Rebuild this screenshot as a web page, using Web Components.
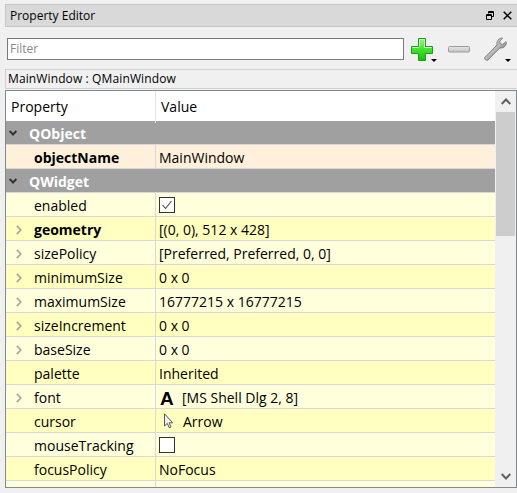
<!DOCTYPE html>
<html>
<head>
<meta charset="utf-8">
<style>
  html,body{ margin:0; height:493px; overflow:hidden; background:#f0f0f0; }
  body{ font:14px 'Open Sans','Noto Sans',sans-serif; color:#000; }
</style>
</head>
<body>
<property-editor>
  <pe-titlebar>Property Editor</pe-titlebar>
  <pe-toolbar></pe-toolbar>
  <pe-classbar>MainWindow : QMainWindow</pe-classbar>
  <prop-table>
    <prop-group>QObject</prop-group>
    <prop-row name="objectName" bold tone="orange">MainWindow</prop-row>
    <prop-group>QWidget</prop-group>
    <prop-row name="enabled" tone="light"><pe-check checked></pe-check></prop-row>
    <prop-row name="geometry" bold expand tone="dark">[(0, 0), 512 x 428]</prop-row>
    <prop-row name="sizePolicy" expand tone="light">[Preferred, Preferred, 0, 0]</prop-row>
    <prop-row name="minimumSize" expand tone="dark">0 x 0</prop-row>
    <prop-row name="maximumSize" expand tone="light">16777215 x 16777215</prop-row>
    <prop-row name="sizeIncrement" expand tone="dark">0 x 0</prop-row>
    <prop-row name="baseSize" expand tone="light">0 x 0</prop-row>
    <prop-row name="palette" tone="dark">Inherited</prop-row>
    <prop-row name="font" expand tone="light"><span style="font:bold 19px/25px 'Liberation Sans',sans-serif;width:14px;display:inline-block;margin:0 8px 0 1px;vertical-align:top">A</span>[MS Shell Dlg 2, 8]</prop-row>
    <prop-row name="cursor" tone="dark"><svg width="12" height="17" viewBox="0 0 12 17" style="margin:0 8px 0 4px;vertical-align:-3px"><path d="M1.500 .8v12.200l2.800-2.600 1.900 4.400 1.800-.8-1.900-4.200h3.600z" fill="#f4f4f4" stroke="#555"/></svg>Arrow</prop-row>
    <prop-row name="mouseTracking" tone="light"><pe-check></pe-check></prop-row>
    <prop-row name="focusPolicy" tone="dark">NoFocus</prop-row>
    <prop-row name="" tone="light"></prop-row>
  </prop-table>
</property-editor>
<script>
customElements.define('property-editor', class extends HTMLElement{
  constructor(){
    super()
    this.attachShadow({mode:'open'}).innerHTML = `
      <style>:host{ display:flex; flex-direction:column; padding:4px 0 0 5px; }</style>
      <slot></slot>`
  }
})

customElements.define('pe-titlebar', class extends HTMLElement{
  constructor(){
    super()
    this.attachShadow({mode:'open'}).innerHTML = `
      <style>
        :host{ display:flex; align-items:center; height:21px; padding-left:4px; background:#d9d9d9; border:1px solid #c6c6c6; border-right:0; font-size:12px; }
        span{ flex:1; line-height:20px; }
        svg{ display:block; }
        .btns{ display:flex; gap:9px; padding-right:5px; align-items:center; }
      </style>
      <span><slot></slot></span>
      <div class="btns">
        <svg width="8" height="9" viewBox="0 0 8 9" fill="none" stroke="#000"><path d="M2.500 2.500v-2h5v5h-2"/><path d="M.5 3.500h5v5h-5z"/><path d="M.5 4.500h5M2.500 1.500h5"/></svg>
        <svg width="9" height="9" viewBox="0 0 9 9" fill="none" stroke="#000" stroke-width="1.500"><path d="M.7.7l7.600 7.600M8.300.7L.7 8.300"/></svg>
      </div>`
  }
})

customElements.define('pe-toolbar', class extends HTMLElement{
  constructor(){
    super()
    this.attachShadow({mode:'open'}).innerHTML = `
      <style>
        :host{ display:flex; align-items:center; height:40px; padding:2px 0 0 2px; }
        .filter{ width:393px; height:20px; border:1px solid #7a7a7a; background:#fff; color:#8a8a8a; font-size:12px; line-height:19px; padding-left:2px; margin-right:7px; flex:none; }
        .tool{ position:relative; display:block; height:26px; flex:none; }
        .tool svg{ display:block; overflow:visible; }
        .drop{ position:absolute; bottom:0; width:0; height:0; border:3.500px solid transparent; border-top:3.500px solid #000; border-bottom:0; }
        .plus{ width:22px; margin-right:15px; }
        .plus .drop{ right:-4px; }
        .minus{ width:22px; margin-right:14px; }
        .wrench{ width:24px; }
        .wrench .drop{ right:-3px; }
      </style>
      <div class="filter">Filter</div>
      <div class="tool plus">
        <svg width="22" height="26" viewBox="0 0 22 26">
          <defs><linearGradient id="g" x1="0" y1="0" x2="0" y2="1"><stop offset="0" stop-color="#9ff088"/><stop offset=".5" stop-color="#45e030"/><stop offset="1" stop-color="#16c00c"/></linearGradient></defs>
          <path d="M7.500 2.500h7v8h7v7h-7v7h-7v-7h-7v-7h7z" fill="url(#g)" stroke="#14a014" stroke-linejoin="round"/>
          <path d="M8.500 10.500v-7h5v8h7M1.500 11.500h6" fill="none" stroke="#d2fbc8"/>
        </svg>
        <i class="drop"></i>
      </div>
      <div class="tool minus">
        <svg width="22" height="26" viewBox="0 0 22 26">
          <defs><linearGradient id="m" x1="0" y1="0" x2="0" y2="1"><stop offset="0" stop-color="#e8e8e8"/><stop offset="1" stop-color="#c2c2c2"/></linearGradient></defs>
          <rect x=".5" y="10.500" width="21" height="5.500" rx="1" fill="url(#m)" stroke="#9c9c9c"/>
        </svg>
      </div>
      <div class="tool wrench">
        <svg width="24" height="26" viewBox="0 0 24 26">
          <defs><linearGradient id="w" x1="0" y1="0" x2="1" y2="1"><stop offset="0" stop-color="#f4f4f4"/><stop offset=".5" stop-color="#b8b8b8"/><stop offset="1" stop-color="#3e3e3e"/></linearGradient></defs>
          <path d="M.8 21.500L13 9c-.6-2.800.8-6 4-7l1.500.2-2.700 2.800.4 2.800 2.700.6 2.900-2.700.6 1.200c-.4 3.500-3.500 5.700-6.600 5L4 24c-1.200 1-4-.4-3.200-2.500z" fill="url(#w)" stroke="#7b7b7b" stroke-width=".9"/>
        </svg>
        <i class="drop"></i>
      </div>`
  }
})

customElements.define('pe-classbar', class extends HTMLElement{
  constructor(){
    super()
    this.attachShadow({mode:'open'}).innerHTML = `
      <style>:host{ display:block; height:18px; line-height:18px; padding-left:2px; background:#f0f0f0; border:1px solid #d0d0d0; border-right:0; font-size:12px; letter-spacing:.12px; }</style>
      <slot></slot>`
  }
})

customElements.define('prop-table', class extends HTMLElement{
  constructor(){
    super()
    this.attachShadow({mode:'open'}).innerHTML = `
      <style>
        :host{ display:flex; height:396px; margin-top:1px; border:1px solid #828790; overflow:hidden; background:#fff; }
        .main{ flex:none; width:489px; overflow:hidden; }
        .head{ display:grid; grid-template-columns:150px 1fr; height:30px; background:#fff; }
        .head div{ line-height:32px; }
        .head div:first-child{ padding-left:5px; border-right:1px solid #e5e5e5; }
        .head div:last-child{ padding-left:5px; }
        .bar{ flex:1; position:relative; display:flex; flex-direction:column; align-items:center; background:#f0f0f0; }
        .up{ height:21px; display:flex; align-items:center; justify-content:center; }
        .thumb{ width:19px; height:124px; background:#cdcdcd; }
        .down{ position:absolute; bottom:2px; left:0; right:0; height:18px; display:flex; align-items:center; justify-content:center; }
      </style>
      <div class="main">
        <div class="head"><div>Property</div><div>Value</div></div>
        <slot></slot>
      </div>
      <div class="bar">
        <div class="up"><svg width="10" height="7" viewBox="0 0 10 7" fill="none" stroke="#606060" stroke-width="2"><path d="M.7 6L5 1.500 9.300 6"/></svg></div>
        <div class="thumb"></div>
        <div class="down"><svg width="10" height="7" viewBox="0 0 10 7" fill="none" stroke="#606060" stroke-width="2"><path d="M.7 1L5 5.500 9.300 1"/></svg></div>
      </div>`
  }
})

customElements.define('prop-group', class extends HTMLElement{
  constructor(){
    super()
    this.attachShadow({mode:'open'}).innerHTML = `
      <style>
        :host{ display:flex; align-items:center; height:23px; background:#a0a0a0; border-bottom:1px solid #d8d8d8; color:#fff; font-weight:700; }
        svg{ margin:0 12px 0 3px; flex:none; }
        span{ padding-top:1px; }
      </style>
      <svg width="8" height="6" viewBox="0 0 8 6" fill="none" stroke="#333" stroke-width="2"><path d="M.6.900L4 4.500 7.400.900"/></svg>
      <span><slot></slot></span>`
  }
})

const tones = { light:'#ffffdc', dark:'#ffffbf', orange:'#fff0dc' }

customElements.define('prop-row', class extends HTMLElement{
  constructor(){
    super()
    this.attachShadow({mode:'open'}).innerHTML = `
      <style>
        :host{ display:grid; grid-template-columns:150px 1fr; height:23px; line-height:23px; border-bottom:1px solid #d8d8d8; white-space:nowrap; }
        .name{ position:relative; padding:1px 0 0 28px; border-right:1px solid #d8d8d8; }
        .name.bold{ font-weight:700; }
        svg{ position:absolute; left:10px; top:8px; }
        .val{ padding:1px 0 0 3px; }
      </style>
      <div class="name"></div>
      <div class="val"><slot></slot></div>`
  }
  connectedCallback(){
    const name = this.shadowRoot.querySelector('.name')
    name.textContent = this.getAttribute('name')
    if (this.hasAttribute('bold')) name.classList.add('bold')
    if (this.hasAttribute('expand')) {
      name.insertAdjacentHTML('afterbegin', '<svg width="6" height="10" viewBox="0 0 6 10" fill="none" stroke="#a8a89a" stroke-width="1.700"><path d="M.8.800L4.800 5 .8 9.200"/></svg>')
    }
    this.style.background = tones[this.getAttribute('tone')]
  }
})

customElements.define('pe-check', class extends HTMLElement{
  constructor(){
    super()
    this.attachShadow({mode:'open'}).innerHTML = `
      <style>
        :host{ display:inline-block; width:14px; height:14px; border:1px solid #333; background:#fff; margin:3px 0 0 0; vertical-align:top; }
        svg{ display:block; margin:2px; }
      </style>
      <svg width="10" height="10" viewBox="0 0 10 10" fill="none" stroke="#444" stroke-width="1.100"><path d="M.5 5l3 3.500L9.500 1"/></svg>`
  }
  connectedCallback(){
    this.shadowRoot.querySelector('svg').style.display = this.hasAttribute('checked') ? 'block' : 'none'
  }
})
</script>
</body>
</html>
